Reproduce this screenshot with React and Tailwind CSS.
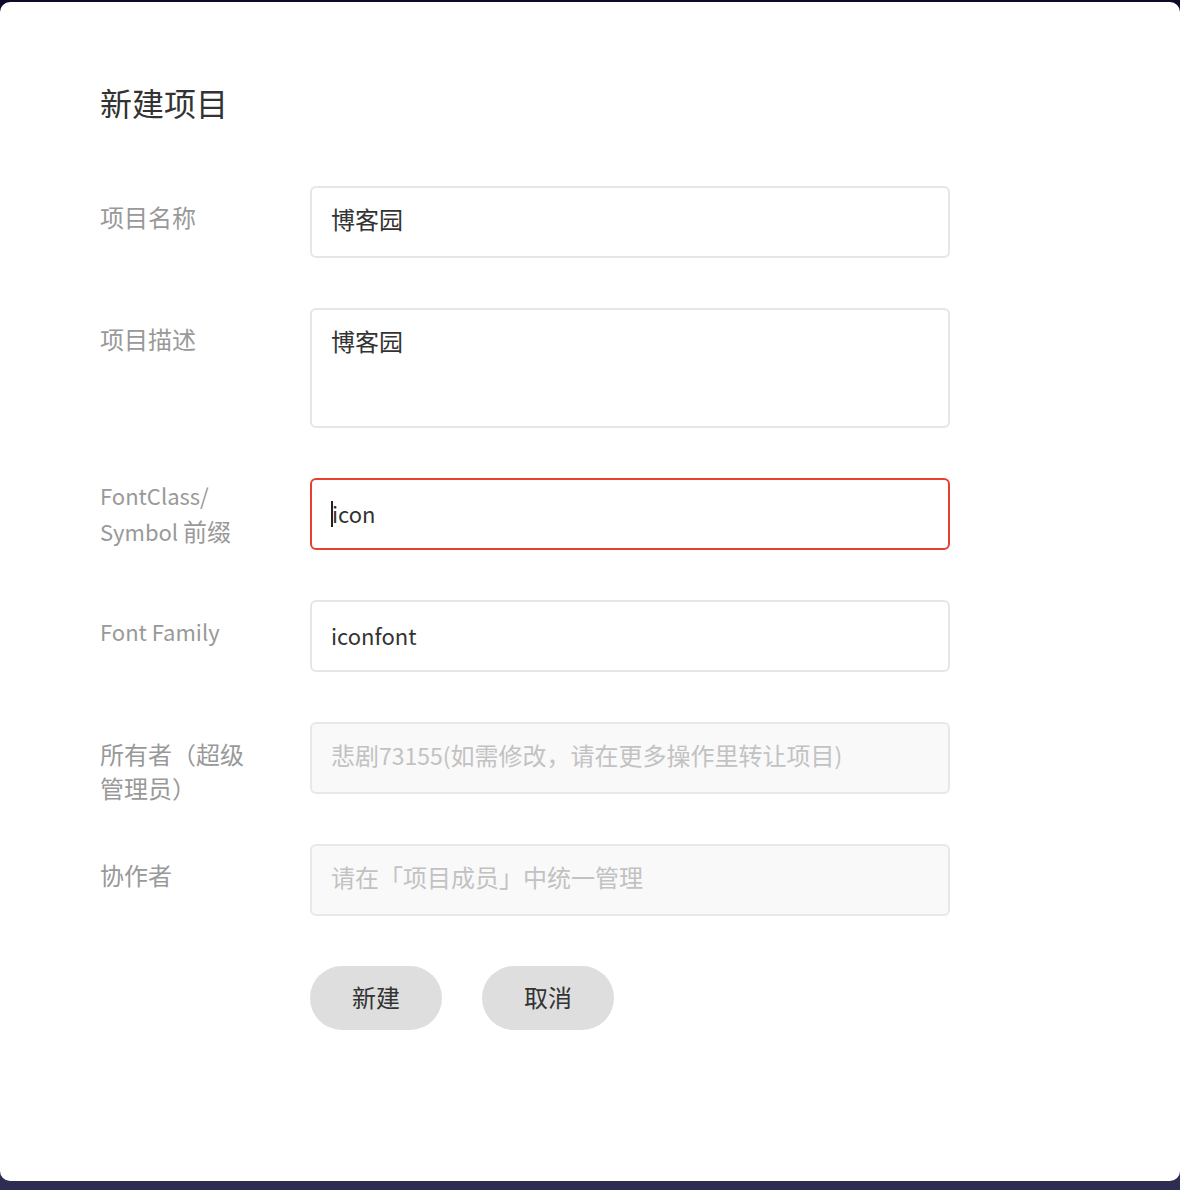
import React from "react";

const font = { fontFamily: '"Noto Sans CJK SC", "Noto Sans", sans-serif' };

function Row({ label, labelClass = "pt-[14px]", h = "h-[72px]", children }) {
  return (
    <div className={`flex ${h} mb-[50px]`}>
      <div className={`w-[210px] shrink-0 text-[24px] leading-[34px] text-[#999999] whitespace-nowrap ${labelClass}`}>{label}</div>
      {children}
    </div>
  );
}

function Box({ children, className = "pb-[6px] bg-white text-[#333333] border-[#e6e6e6]" }) {
  return (
    <div className={`w-[640px] h-[72px] rounded-[6px] border-2 px-[19px] flex items-center text-[24px] whitespace-nowrap ${className}`}>
      {children}
    </div>
  );
}

const L = ({ children, className = "text-[22px]" }) => <span className={className}>{children}</span>;

export default function App() {
  return (
    <div className="h-[1190px] w-[1180px] bg-gradient-to-b from-[#0e0b28] to-[#2f2d52] pt-[2px] pb-[9px]" style={font}>
      <div className="h-full w-full bg-white rounded-[10px] pl-[100px] pt-[77px]">
        <h1 className="text-[32px] leading-[46px] text-[#333333] font-normal mb-[61px]">新建项目</h1>

        <Row label="项目名称">
          <Box>博客园</Box>
        </Row>

        <Row label="项目描述" h="h-[120px]">
          <div className="w-[640px] h-[120px] rounded-[6px] border-2 border-[#e6e6e6] bg-white px-[19px] pt-[14px] text-[24px] leading-[34px] text-[#333333]">
            博客园
          </div>
        </Row>

        <Row label={<><L>FontClass/</L><br /><L>Symbol </L>前缀</>} labelClass="mt-[-1px] leading-[35px]">
          <Box className="pb-[2px] bg-white text-[#333333] border-[#e8402f]">
            <span className="inline-block w-[2px] h-[26px] bg-[#222] mr-[-1px] mt-[2px]"></span>
            <L>icon</L>
          </Box>
        </Row>

        <Row label={<L>Font Family</L>}>
          <Box className="pb-[2px] bg-white text-[#333333] border-[#e6e6e6]"><L>iconfont</L></Box>
        </Row>

        <Row label={<>所有者（超级<br />管理员）</>} labelClass="pt-[15px] leading-[33px]">
          <Box className="pb-[6px] bg-[#f9f9f9] text-[#c2c2c2] border-[#e8e8e8]">悲剧<L className="text-[23px]">73155(</L>如需修改，请在更多操作里转让项目<L className="text-[23px]">)</L></Box>
        </Row>

        <Row label="协作者">
          <Box className="pb-[6px] bg-[#f9f9f9] text-[#c2c2c2] border-[#e8e8e8]">请在「项目成员」中统一管理</Box>
        </Row>

        <div className="flex pl-[210px] gap-[40px]">
          <button className="w-[132px] h-[64px] rounded-full bg-[#dedede] text-[24px] text-[#333333] pb-[2px]">新建</button>
          <button className="w-[132px] h-[64px] rounded-full bg-[#dedede] text-[24px] text-[#333333] pb-[2px]">取消</button>
        </div>
      </div>
    </div>
  );
}
